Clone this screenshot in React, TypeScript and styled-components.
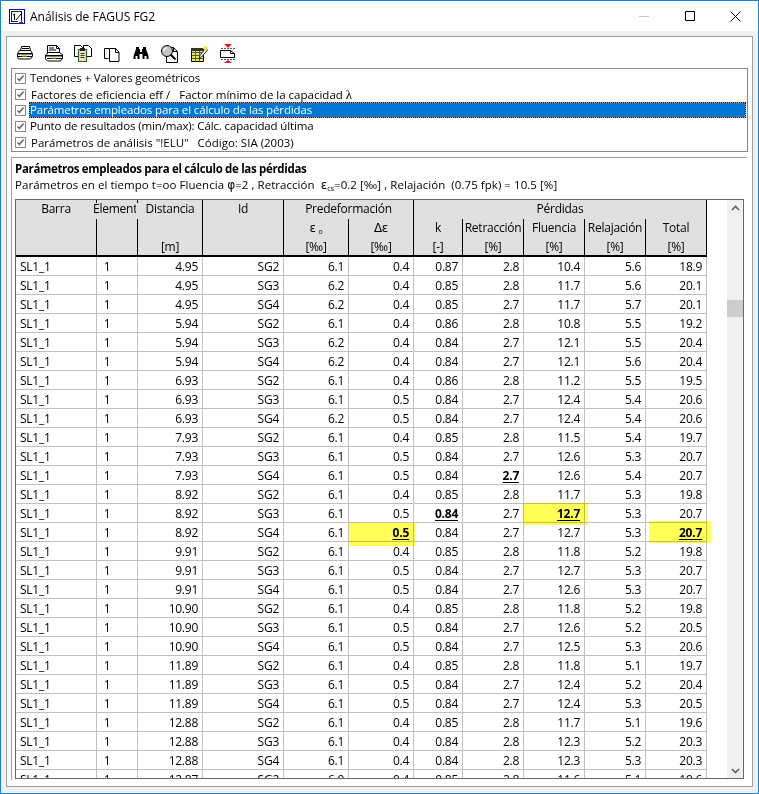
import React from 'react';
import styled, { createGlobalStyle } from 'styled-components';

const GlobalStyle = createGlobalStyle`
  html, body {
    margin: 0;
    padding: 0;
    background: #f0f0f0;
  }
  * {
    box-sizing: border-box;
  }
`;

const Window = styled.div`
  width: 759px;
  height: 794px;
  border: 1px solid #1883d7;
  background: #f0f0f0;
  display: flex;
  flex-direction: column;
  font-family: 'Open Sans', 'Noto Sans', sans-serif;
  font-size: 11.5px;
  color: #000;
  overflow: hidden;
`;

const TitleBar = styled.div`
  height: 30px;
  flex: none;
  background: #fff;
  display: flex;
  align-items: center;
  padding-left: 8px;
`;

const AppIcon = styled.div`
  width: 16px;
  height: 15px;
  border: 1px solid #0000e0;
  margin-right: 5px;
  display: flex;
`;

const TitleText = styled.div`
  flex: 1;
  font-size: 12px;
`;

const WinButton = styled.div`
  width: 45.5px;
  height: 30px;
  display: flex;
  align-items: center;
  justify-content: center;
`;

const Panel = styled.div`
  flex: 1;
  margin: 5px 5px 6px;
  background: #fff;
  border: 1px solid #a0a0a0;
  padding: 0 4px 6px;
  display: flex;
  flex-direction: column;
  min-height: 0;
`;

const Toolbar = styled.div`
  height: 31px;
  flex: none;
  display: flex;
  align-items: center;
  gap: 11px;
  padding: 2px 0 0 5px;
`;

const ListBox = styled.div`
  height: 84px;
  flex: none;
  border: 1px solid #828790;
  padding: 1px 1px 0 0;
`;

const ListRow = styled.div`
  height: 16px;
  display: flex;
  align-items: center;
  padding-left: 3px;
  white-space: pre;
`;

const CheckBox = styled.span`
  width: 11px;
  height: 11px;
  flex: none;
  border: 1px solid #8a8a8a;
  background: #fff;
  display: flex;
  margin-right: 3px;
`;

const ListLabel = styled.span<{ $selected?: boolean; $nudge?: boolean }>`
  flex: ${p => (p.$selected ? 1 : 'none')};
  height: 16px;
  line-height: 16px;
  letter-spacing: ${p => (p.$nudge ? 0 : -0.14)}px;
  padding-left: ${p => (p.$nudge ? 2 : 1)}px;
  margin-top: ${p => (p.$nudge ? 2 : 0)}px;
  background: ${p => (p.$selected ? '#0078d7' : 'transparent')};
  color: ${p => (p.$selected ? '#fff' : '#000')};
  outline: ${p => (p.$selected ? '1px dotted #000' : 'none')};
  outline-offset: -1px;
  box-shadow: ${p => (p.$selected ? 'inset 0 0 0 1px #f09a3a' : 'none')};
`;

const Lambda = styled.span`
  font-family: 'Liberation Serif', serif;
  font-size: 13px;
`;

const ResultGroup = styled.div`
  flex: 1;
  min-height: 0;
  margin-top: 5px;
  margin-right: 1px;
  border-top: 1px solid #a0a0a0;
  border-left: 1px solid #a0a0a0;
  padding: 3px 0 0 3px;
  display: flex;
  flex-direction: column;
`;

const GroupTitle = styled.div`
  height: 16px;
  line-height: 16px;
  font-weight: 700;
  letter-spacing: -0.33px;
  white-space: pre;
`;

const GroupSub = styled.div`
  height: 16px;
  line-height: 16px;
  white-space: pre;
  margin-bottom: 6px;
  letter-spacing: 0.05px;
`;

const Greek = styled.span`
  font-family: 'DejaVu Sans', sans-serif;
  font-size: 12px;
`;

const Sub = styled.sub`
  font-size: 7px;
  line-height: 0;
  vertical-align: -2px;
`;

const TableFrame = styled.div`
  width: 729px;
  height: 580px;
  flex: none;
  border: 1px solid #696969;
  display: flex;
  overflow: hidden;
`;

const TableWrap = styled.div`
  width: 711px;
  flex: none;
  overflow: hidden;
`;

const Grid = styled.table`
  width: 691px;
  table-layout: fixed;
  border-collapse: separate;
  border-spacing: 0;
  font-size: 12px;
  letter-spacing: -0.25px;
`;

const HeadCell = styled.th<{ $line?: boolean; $first?: boolean; $last?: boolean; $tick?: boolean }>`
  height: ${p => (p.$last ? 19 : 18)}px;
  padding: ${p => (p.$first ? '0 0 2px' : p.$last ? '1px 0 0' : '0 0 1px')};
  background: #e0e0e0;
  font-weight: 400;
  position: relative;
  text-align: center;
  white-space: nowrap;
  border-right: 1px solid ${p => (p.$line ? '#000' : '#e0e0e0')};
  border-bottom: ${p => (p.$last ? '2px solid #000' : 'none')};

  &::after {
    content: '';
    display: ${p => (p.$tick ? 'block' : 'none')};
    position: absolute;
    top: 0;
    right: -1px;
    width: 1px;
    height: 3px;
    background: #000;
  }
`;

const ClippedHead = styled.span`
  display: block;
  width: 43px;
  margin-left: -4px;
  overflow: hidden;
  text-align: left;
`;

const BodyCell = styled.td<{ $left?: boolean }>`
  height: 19px;
  padding: 0 4px;
  position: relative;
  white-space: nowrap;
  text-align: ${p => (p.$left ? 'left' : 'right')};
  border-right: 1px solid #c0c0c0;
  border-bottom: 1px solid #c0c0c0;
`;

const Strong = styled.span`
  font-weight: 700;
  text-decoration: underline;
  text-decoration-thickness: 1px;
  text-underline-offset: 2px;
`;

const Marker = styled.span<{ $l: number; $t: number; $r: number; $b: number }>`
  position: absolute;
  left: ${p => p.$l}px;
  top: ${p => p.$t}px;
  right: ${p => p.$r}px;
  bottom: ${p => p.$b}px;
  background: #ffff55;
  mix-blend-mode: multiply;
`;

const ScrollGutter = styled.div`
  flex: 1;
  display: flex;
  justify-content: flex-end;
`;

const ScrollBar = styled.div`
  width: 16px;
  background: #f0f0f0;
  position: relative;
  display: flex;
  flex-direction: column;
  justify-content: space-between;
  align-items: center;
  padding: 5px 0 4px;
`;

const ScrollThumb = styled.div`
  position: absolute;
  left: 0;
  right: 0;
  top: 100px;
  height: 17px;
  background: #cdcdcd;
`;

const widths = [81, 41, 65, 81, 65, 65, 49, 61, 61, 61, 61];

// dist, id, eps, deps, k, retr, flu, rel, total  ("*" bold, "!" + marker)
const rows = [
  '4.95 SG2 6.1 0.4 0.87 2.8 10.4 5.6 18.9',
  '4.95 SG3 6.2 0.4 0.85 2.8 11.7 5.6 20.1',
  '4.95 SG4 6.2 0.4 0.85 2.7 11.7 5.7 20.1',
  '5.94 SG2 6.1 0.4 0.86 2.8 10.8 5.5 19.2',
  '5.94 SG3 6.2 0.4 0.84 2.7 12.1 5.5 20.4',
  '5.94 SG4 6.2 0.4 0.84 2.7 12.1 5.6 20.4',
  '6.93 SG2 6.1 0.4 0.86 2.8 11.2 5.5 19.5',
  '6.93 SG3 6.1 0.5 0.84 2.7 12.4 5.4 20.6',
  '6.93 SG4 6.2 0.5 0.84 2.7 12.4 5.4 20.6',
  '7.93 SG2 6.1 0.4 0.85 2.8 11.5 5.4 19.7',
  '7.93 SG3 6.1 0.5 0.84 2.7 12.6 5.3 20.7',
  '7.93 SG4 6.1 0.5 0.84 2.7* 12.6 5.4 20.7',
  '8.92 SG2 6.1 0.4 0.85 2.8 11.7 5.3 19.8',
  '8.92 SG3 6.1 0.5 0.84* 2.7 12.7! 5.3 20.7',
  '8.92 SG4 6.1 0.5! 0.84 2.7 12.7 5.3 20.7!',
  '9.91 SG2 6.1 0.4 0.85 2.8 11.8 5.2 19.8',
  '9.91 SG3 6.1 0.5 0.84 2.7 12.7 5.3 20.7',
  '9.91 SG4 6.1 0.5 0.84 2.7 12.6 5.3 20.7',
  '10.90 SG2 6.1 0.4 0.85 2.8 11.8 5.2 19.8',
  '10.90 SG3 6.1 0.5 0.84 2.7 12.6 5.2 20.5',
  '10.90 SG4 6.1 0.5 0.84 2.7 12.5 5.3 20.6',
  '11.89 SG2 6.1 0.4 0.85 2.8 11.8 5.1 19.7',
  '11.89 SG3 6.1 0.5 0.84 2.7 12.4 5.2 20.4',
  '11.89 SG4 6.1 0.5 0.84 2.7 12.4 5.3 20.5',
  '12.88 SG2 6.1 0.4 0.85 2.8 11.7 5.1 19.6',
  '12.88 SG3 6.1 0.4 0.84 2.8 12.3 5.2 20.3',
  '12.88 SG4 6.1 0.4 0.84 2.8 12.3 5.3 20.3',
  '12.87 SG2 6.0 0.4 0.85 2.8 11.6 5.1 19.6',
];

// where each yellow marker spills out of its cell
const markerBox: Record<number, { l: number; t: number; r: number; b: number }> = {
  3: { l: 0, t: 0, r: -2, b: -5 },
  6: { l: -1, t: -1, r: -4, b: -3 },
  8: { l: 3, t: -2, r: -5, b: -2 },
};

const Check = () => (
  <svg width="9" height="9" viewBox="0 0 9 9">
    <path d="M1.500 4.500 L3.500 6.500 L7.500 1.500" fill="none" stroke="#5e5e5e" strokeWidth="1.4" />
  </svg>
);

const Printer = () => (
  <svg width="18" height="18" viewBox="0 0 18 18">
    <path d="M5.500 1.500h8l1 4h-10z" fill="#fff" stroke="#000" />
    <path d="M6 3.500h7" stroke="#000" />
    <path d="M3.500 5.500h11l2 3v3l-2 2.500h-12l-1-2v-3.500z" fill="#fff" stroke="#000" />
    <path d="M2 8h14v1.500h-14zM2 11h14v1h-14z" fill="#000" />
    <path d="M6 10h5v1.500h-5z" fill="#e8d84a" />
  </svg>
);

const PrintSetup = () => (
  <svg width="18" height="18" viewBox="0 0 18 18">
    <path d="M2.500.500h9l3 3v5h-12z" fill="#fff" stroke="#000" />
    <path d="M11.500.500v3h3M4 3h5M4 5h7" fill="none" stroke="#000" />
    <path d="M3.500 7.500h11l3 2v4l-2 2.500h-13l-2-2v-4z" fill="#fff" stroke="#000" />
    <path d="M1 10h16v1.500h-16zM2 13h15v1h-15z" fill="#000" />
    <path d="M6 12h5v1.500h-5z" fill="#e8d84a" />
  </svg>
);

const ClipPages = () => (
  <svg width="18" height="18" viewBox="0 0 18 18">
    <path d="M.500.500h6l2 2v9h-8zM9.500.500h5l3 3v8h-8z" fill="#fff" stroke="#000" />
    <path d="M4.500 4.500h8v12h-8z" fill="#e9e9b8" stroke="#39582f" strokeWidth="1.200" />
    <path d="M6 3h5v3h-5z" fill="#1e1e1e" />
    <path d="M6.500 8.500h4M6.500 10.500h4M6.500 12.500h4" stroke="#333" />
  </svg>
);

const Pages = () => (
  <svg width="18" height="18" viewBox="-1 -1 18 18">
    <path d="M5.500 2.500h-5v10h4" fill="none" stroke="#000" />
    <path d="M5.500 2.500h6l3.500 3.500v9.500h-9.500z" fill="#fff" stroke="#000" />
    <path d="M11.500 2.500v4h3.500" fill="none" stroke="#000" />
  </svg>
);

const Binoculars = () => (
  <svg width="18" height="18" viewBox="-1 -1 18 18">
    <path d="M3 1h3v2h1v3h2v-3h1v-2h3v2l2.500 7v3h-6v-5h-3v5h-6v-3l2.500-7z" fill="#000" />
    <path d="M2.500 10h2v3h-2zM11.500 10h2v3h-2z" fill="#fff" />
  </svg>
);

const Magnifier = () => (
  <svg width="18" height="18" viewBox="0 0 18 18">
    <path d="M5.500 9.500v8h11v-11l-4-4h-3" fill="#fff" stroke="#000" />
    <path d="M12.500 2.500v4h4" fill="none" stroke="#000" />
    <circle cx="6" cy="6" r="5.500" fill="#c4c4c4" stroke="#000" />
    <path d="M3 6a3 3 0 0 1 3-3" fill="none" stroke="#fff" strokeWidth="1.200" />
    <path d="M9.500 9.500l5 5" stroke="#000" strokeWidth="2" />
  </svg>
);

const TableEdit = () => (
  <svg width="18" height="18" viewBox="0 0 18 18">
    <path d="M1.500 3.500h12v13h-12z" fill="#ecec50" stroke="#000" />
    <path d="M1.500 7.500h12M5.500 3.500v13M9.500 3.500v13M1.500 10.500h12M1.500 13.500h12" stroke="#555" />
    <path d="M1 3h13v3h-13z" fill="#333" />
    <path d="M9 14l1-3.500 5.500-7.500 2 2-6 7z" fill="#fff" stroke="#222" />
    <path d="M14 1h3.500v3l-2 1.500-2.500-2z" fill="#f6f04a" />
  </svg>
);

const PageHeight = () => (
  <svg width="18" height="19" viewBox="0 0 18 19">
    <path d="M1.500 6.500h10l4 3v4h-14z" fill="#fff" stroke="#000" />
    <path d="M11.500 6.500v3h4" fill="none" stroke="#000" />
    <path d="M2 4.500h14M2 15.500h14" stroke="#555" strokeDasharray="2 1" />
    <path d="M5 0h8l-4 4zM5 19h8l-4-3z" fill="#ed1c24" />
  </svg>
);

const Chevron = ({ down }: { down?: boolean }) => (
  <svg width="9" height="6" viewBox="0 0 9 6">
    <path d={down ? 'M1 1l3.500 3.500L8 1' : 'M1 5l3.500-3.500L8 5'} fill="none" stroke="#606060" strokeWidth="1.700" />
  </svg>
);

const App: React.FC = () => {
  return (
    <Window>
      <GlobalStyle />
      <TitleBar>
        <AppIcon>
          <svg width="14" height="13" viewBox="0 0 14 13">
            <path d="M1 1.500h11M1.500 1v10M1 11.500h7" fill="none" stroke="#222" />
            <path d="M4.500 4v6M3 5l1.500-1M6 10l5-6M11.500 2v9" stroke="#000" fill="none" />
            <path d="M9 12.500h4M11.500 10.500v2" stroke="#e00000" />
          </svg>
        </AppIcon>
        <TitleText>Análisis de FAGUS FG2</TitleText>
        <WinButton>
          <svg width="10" height="1"><path d="M0 .5h10" stroke="#c8c8c8" /></svg>
        </WinButton>
        <WinButton>
          <svg width="10" height="10"><path d="M.5.500h9v9h-9z" fill="none" stroke="#000" /></svg>
        </WinButton>
        <WinButton>
          <svg width="11" height="11"><path d="M.5.500l10 10M10.500.500l-10 10" fill="none" stroke="#000" /></svg>
        </WinButton>
      </TitleBar>

      <Panel>
        <Toolbar>
          <Printer />
          <PrintSetup />
          <ClipPages />
          <Pages />
          <Binoculars />
          <Magnifier />
          <TableEdit />
          <PageHeight />
        </Toolbar>

        <ListBox>
          <ListRow>
            <CheckBox><Check /></CheckBox>
            <ListLabel>Tendones + Valores geométricos</ListLabel>
          </ListRow>
          <ListRow>
            <CheckBox><Check /></CheckBox>
            <ListLabel $nudge>Factores de eficiencia eff /   Factor mínimo de la capacidad <Lambda>λ</Lambda></ListLabel>
          </ListRow>
          <ListRow>
            <CheckBox><Check /></CheckBox>
            <ListLabel $selected>Parámetros empleados para el cálculo de las pérdidas</ListLabel>
          </ListRow>
          <ListRow>
            <CheckBox><Check /></CheckBox>
            <ListLabel>Punto de resultados (min/max): Cálc. capacidad última</ListLabel>
          </ListRow>
          <ListRow>
            <CheckBox><Check /></CheckBox>
            <ListLabel $nudge>Parámetros de análisis "!ELU"   Código: SIA (2003)</ListLabel>
          </ListRow>
        </ListBox>

        <ResultGroup>
          <GroupTitle>Parámetros empleados para el cálculo de las pérdidas</GroupTitle>
          <GroupSub>
            Parámetros en el tiempo t=oo Fluencia <Greek>φ</Greek>=2 , Retracción  <Greek>ε</Greek><Sub>cs</Sub>=0.2 [‰] , Relajación  (0.75 fpk) = 10.5 [%]
          </GroupSub>

          <TableFrame>
            <TableWrap>
              <Grid>
                <colgroup>
                  {widths.map((w, i) => <col key={i} style={{ width: w }} />)}
                </colgroup>
                <thead>
                  <tr>
                    <HeadCell $first $tick>Barra</HeadCell>
                    <HeadCell $first $tick><ClippedHead>Elemento</ClippedHead></HeadCell>
                    <HeadCell $first $line>Distancia</HeadCell>
                    <HeadCell $first $line>Id</HeadCell>
                    <HeadCell $first $line colSpan={2}>Predeformación</HeadCell>
                    <HeadCell $first $line colSpan={5}>Pérdidas</HeadCell>
                  </tr>
                  <tr>
                    <HeadCell $line />
                    <HeadCell $line />
                    <HeadCell $line />
                    <HeadCell $line />
                    <HeadCell $line><Greek>ε</Greek> <Sub>o</Sub></HeadCell>
                    <HeadCell $line><Greek>Δε</Greek></HeadCell>
                    <HeadCell $line>k</HeadCell>
                    <HeadCell $line>Retracción</HeadCell>
                    <HeadCell $line>Fluencia</HeadCell>
                    <HeadCell $line>Relajación</HeadCell>
                    <HeadCell $line>Total</HeadCell>
                  </tr>
                  <tr>
                    <HeadCell $line $last />
                    <HeadCell $line $last />
                    <HeadCell $line $last>[m]</HeadCell>
                    <HeadCell $line $last />
                    <HeadCell $line $last>[‰]</HeadCell>
                    <HeadCell $line $last>[‰]</HeadCell>
                    <HeadCell $line $last>[-]</HeadCell>
                    <HeadCell $line $last>[%]</HeadCell>
                    <HeadCell $line $last>[%]</HeadCell>
                    <HeadCell $line $last>[%]</HeadCell>
                    <HeadCell $line $last>[%]</HeadCell>
                  </tr>
                </thead>
                <tbody>
                  {rows.map((row, r) => (
                    <tr key={r}>
                      <BodyCell $left>SL1_1</BodyCell>
                      <BodyCell $left>&nbsp;1</BodyCell>
                      {row.split(' ').map((v, c) => {
                        const bold = v.endsWith('*') || v.endsWith('!');
                        const text = bold ? v.slice(0, -1) : v;
                        const box = v.endsWith('!') ? markerBox[c] : null;
                        return (
                          <BodyCell key={c}>
                            {box && <Marker $l={box.l} $t={box.t} $r={box.r} $b={box.b} />}
                            {bold ? <Strong>{text}</Strong> : text}
                          </BodyCell>
                        );
                      })}
                    </tr>
                  ))}
                </tbody>
              </Grid>
            </TableWrap>
            <ScrollGutter>
              <ScrollBar>
                <Chevron />
                <ScrollThumb />
                <Chevron down />
              </ScrollBar>
            </ScrollGutter>
          </TableFrame>
        </ResultGroup>
      </Panel>
    </Window>
  );
};

export default App;
